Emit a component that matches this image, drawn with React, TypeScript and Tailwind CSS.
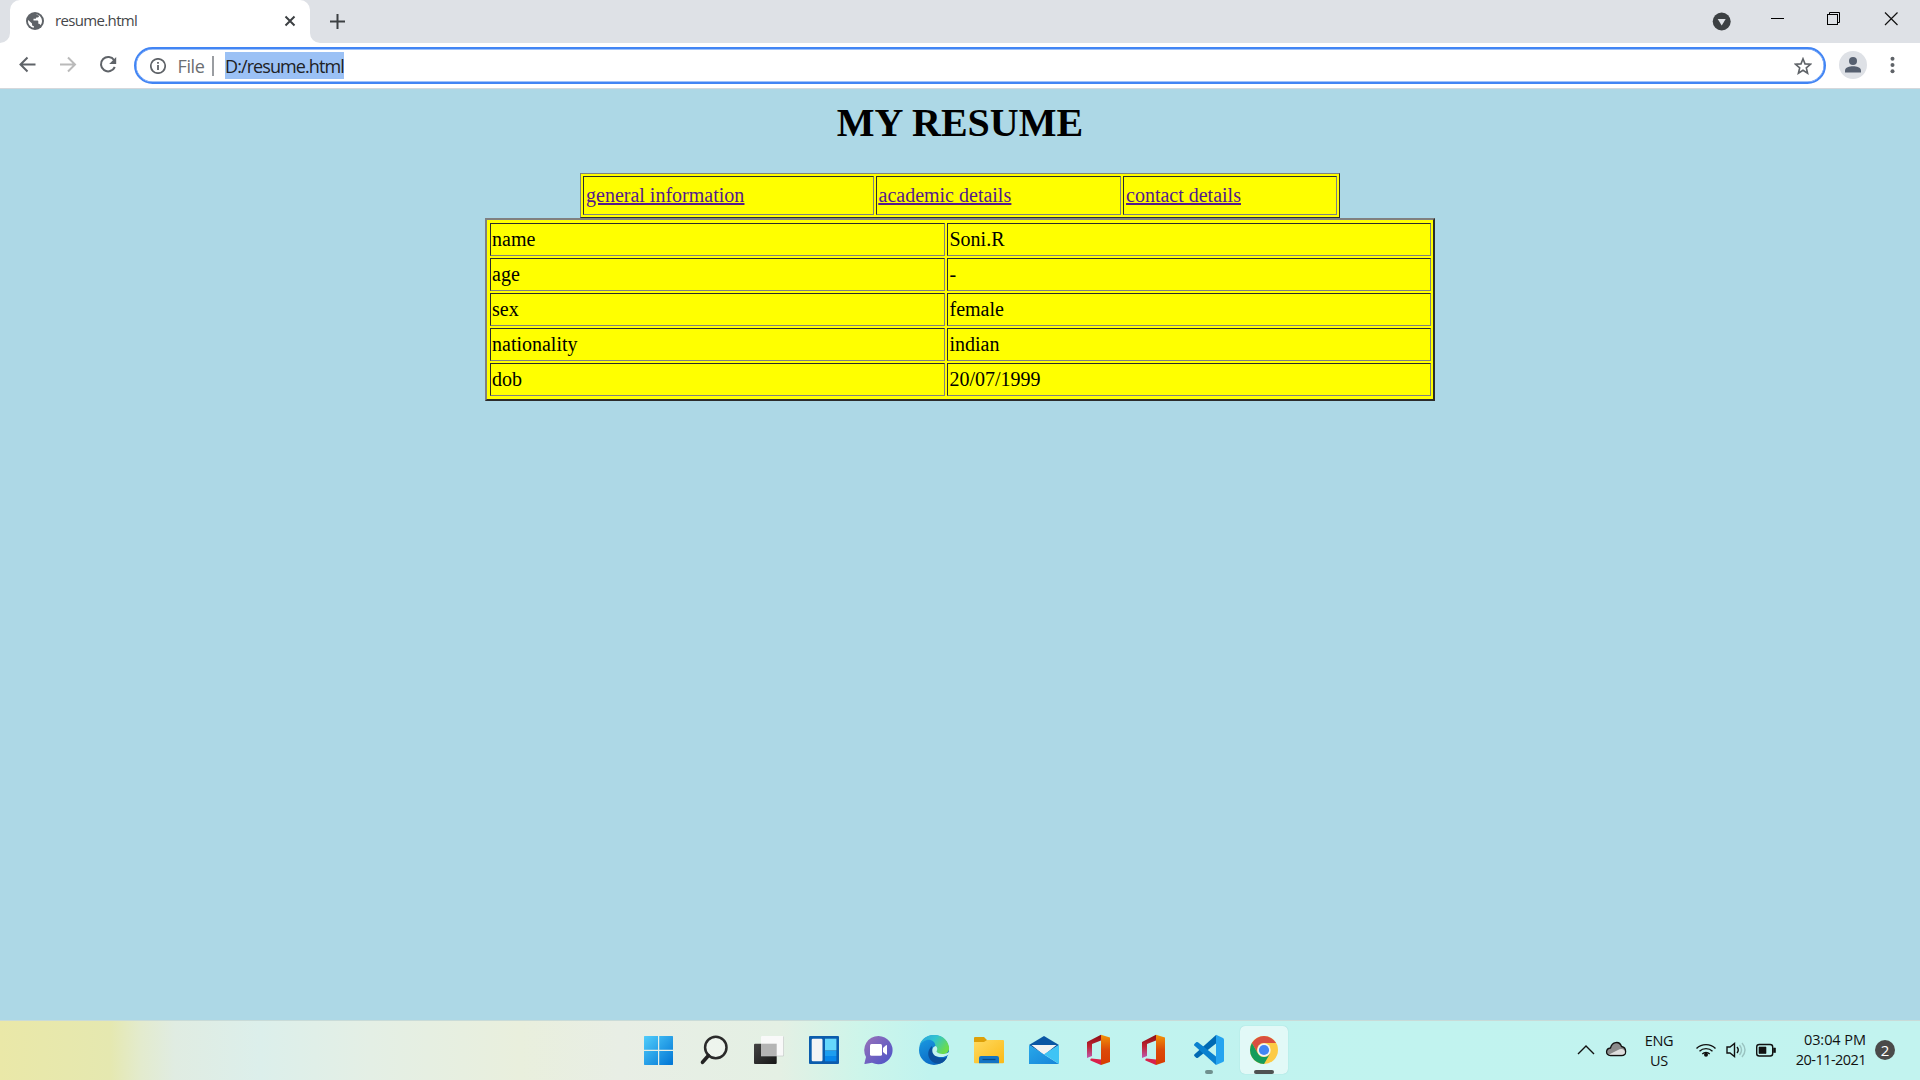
import React from "react";

const ui = "font-['Open_Sans','Noto_Sans',sans-serif]";

function TabStrip() {
  return (
    <div className="relative flex h-[43px] items-start bg-[#dee1e6]">
      <svg className="h-[43px] w-[322px] shrink-0" viewBox="0 0 322 43">
        <path d="M0 43A10 10 0 0 0 10 33V10A10 10 0 0 1 20 0H300A10 10 0 0 1 310 10V33A10 10 0 0 0 320 43Z" fill="#fff" />
        <circle cx="35" cy="21" r="9" fill="#5f6368" />
        <path d="M35.800 14.200C39.500 14.500 42 17.500 42 21C42 22.500 41.500 24 40.500 25.200C40 24 39.200 23.800 38.300 23.800V21.500C38.300 20.800 37.800 20.500 37.200 20.500H33.500V18.800H35.200C35.900 18.800 36.200 18.300 36.200 17.500H37.500C38.500 17.500 39 16.800 39 15.800ZM28.200 20L32 23.500V24.500C32 25.500 32.800 26 33.800 26V27.800C30.500 27.300 28 24.500 28 21Z" fill="#fff" />
        <path d="M285.500 16.500L294.500 25.500M294.500 16.500L285.500 25.500" stroke="#3c4043" strokeWidth="2" />
      </svg>
      <svg className="mt-[13px] ml-[7px] h-4 w-4" viewBox="0 0 16 16">
        <path d="M8.500 1V16M1 8.500H16" stroke="#3c4043" strokeWidth="2" />
      </svg>
      <span className={`absolute left-[55px] top-[10px] text-[15px] leading-[20px] tracking-[-0.65px] text-[#45474a] ${ui}`}>resume.html</span>
      <svg className="ml-auto h-[43px] w-[220px]" viewBox="1700 0 220 43">
        <circle cx="1721.700" cy="21.500" r="9" fill="#3c4043" />
        <path d="M1717.700 19H1725.700L1721.700 25.500Z" fill="#dee1e6" />
        <g stroke="#000" strokeWidth="1" fill="none">
          <path d="M1771 18.500H1784" />
          <rect x="1827.500" y="14.500" width="10" height="10" />
          <path d="M1829.500 14V12.500H1839.500V22.500H1838" />
          <path d="M1885 12.500L1897.500 25M1897.500 12.500L1885 25" stroke="#111" strokeWidth="1.200" />
        </g>
      </svg>
    </div>
  );
}

function Toolbar() {
  return (
    <div className="flex h-[46px] items-start border-b border-[#d5d8dc] bg-white">
      <svg className="h-[45px] w-[134px] shrink-0" viewBox="0 43 134 45" fill="none" strokeWidth="2">
        <path d="M35.500 64.500H20.500M27.500 57.500L20.500 64.500L27.500 71.500" stroke="#5f6368" />
        <path d="M60 64.500H75M68 57.500L75 64.500L68 71.500" stroke="#bababa" />
        <path d="M114.200 60.200A7.200 7.200 0 1 0 114.800 67" stroke="#5f6368" />
        <path d="M116.200 57V64H109.200Z" fill="#5f6368" />
      </svg>
      <div className={`mt-1 flex h-[37px] w-[1692px] items-center rounded-full border-2 border-[#4285f4] bg-white shadow-[inset_0_0_0_0.500px_#4285f4] ${ui}`}>
        <svg className="ml-[13.500px] h-4 w-4" viewBox="0 0 16 16">
          <circle cx="8" cy="8" r="7.200" fill="none" stroke="#5f6368" strokeWidth="1.700" />
          <path d="M8 7V12M8 4V5.700" stroke="#5f6368" strokeWidth="1.800" />
        </svg>
        <span className="ml-[12px] w-[34.500px] pt-px text-[18px] leading-[27px] tracking-[-0.4px] text-[#6b6e72]">File</span>
        <span className="h-5 w-[2px] bg-[#9a9da1]" />
        <span className="ml-[11px] h-[27px] w-[119px] whitespace-nowrap bg-[#9bc1f5] text-[18px] leading-[28px] tracking-[-0.92px] text-[#202124]">D:/resume.html</span>
        <svg className="ml-auto mr-[12.500px] h-[18px] w-[18px]" viewBox="0 0 18 18">
          <path d="M9 1.800L11 6.900L16.500 7.300L12.300 10.800L13.600 16.200L9 13.300L4.400 16.200L5.700 10.800L1.500 7.300L7 6.900Z" fill="none" stroke="#5f6368" strokeWidth="1.600" />
        </svg>
      </div>
      <svg className="h-[45px] w-[94px]" viewBox="1826 43 94 45">
        <circle cx="1853" cy="65" r="14" fill="#dee1e6" />
        <circle cx="1853" cy="61" r="4" fill="#566070" />
        <path d="M1845 72.500V70.500C1845 67.500 1849.500 66.200 1853 66.200S1861 67.500 1861 70.500V72.500Z" fill="#566070" />
        <g fill="#5f6368"><circle cx="1892.500" cy="58.800" r="2" /><circle cx="1892.500" cy="65" r="2" /><circle cx="1892.500" cy="71.200" r="2" /></g>
      </svg>
    </div>
  );
}

const cell = "border border-t-[#2c2c2c] border-l-[#2c2c2c] border-b-[#808080] border-r-[#808080] flex items-center";
const frame = "border-t-[#808080] border-l-[#808080] border-b-[#2c2c2c] border-r-[#2c2c2c] bg-[#ffff00]";

const details = [
  ["name", "Soni.R"],
  ["age", "-"],
  ["sex", "female"],
  ["nationality", "indian"],
  ["dob", "20/07/1999"],
];

function ResumePage() {
  return (
    <main className="flex flex-1 flex-col items-center bg-[#add8e6] font-['Liberation_Serif',serif] text-[20px] leading-[23px] text-black">
      <h1 className="mt-[11px] h-[73px] text-[40px] font-bold leading-[46px]">MY RESUME</h1>
      <nav className={`grid h-[45px] w-[760px] grid-cols-[291px_245px_214px] gap-[2px] border p-[2px] text-[#551a8b] underline ${frame}`}>
        <a className={`${cell} pl-[2px]`}>general information</a>
        <a className={`${cell} pl-[1.500px]`}>academic details</a>
        <a className={`${cell} pl-[2px]`}>contact details</a>
      </nav>
      <section className={`grid w-[950px] auto-rows-[33px] grid-cols-[455px_484px] gap-[2px] border-2 py-[3px] pl-[3px] pr-[2px] ${frame}`}>
        {details.map(([k, v]) => (
          <React.Fragment key={k}>
            <div className={`${cell} pl-px`}>{k}</div>
            <div className={`${cell} pl-[1.500px]`}>{v}</div>
          </React.Fragment>
        ))}
      </section>
    </main>
  );
}

function Slot({ children, active }: { children: React.ReactNode; active?: boolean }) {
  return (
    <div className={active ? "h-12 w-12 rounded-[5px] bg-[#e2f9f7] shadow-[0_0_1px_#8cc]" : "h-12 w-12"}>
      <svg className="h-12 w-12" viewBox="0 0 48 48">{children}</svg>
    </div>
  );
}

function OfficeIcon() {
  return (
    <Slot>
      <path d="M12 16L26 8.700V14.500L17 18V30L12 32Z" fill="url(#offRed)" />
      <path d="M26 8.700L35 11.500V36L26 39Z" fill="url(#offOrange)" />
      <path d="M16.500 32.500L26 33.500V39L15.500 34.500C15 33.800 15.500 32.500 16.500 32.500Z" fill="#d9204a" />
    </Slot>
  );
}

function Gradients() {
  return (
    <svg className="absolute h-0 w-0">
      <defs>
        <linearGradient id="win" x1="0" y1="0" x2="1" y2="1"><stop stopColor="#50cdfb" /><stop offset="1" stopColor="#0074d4" /></linearGradient>
        <linearGradient id="dark" x1="0" y1="0" x2="1" y2="1"><stop stopColor="#444" /><stop offset="1" stopColor="#161616" /></linearGradient>
        <linearGradient id="chat" x1="0" y1="0" x2="1" y2="1"><stop stopColor="#9a72b8" /><stop offset="1" stopColor="#4a52c9" /></linearGradient>
        <linearGradient id="edgeTop" x1="0" y1="0" x2="1" y2=".5"><stop stopColor="#2a9fe0" /><stop offset=".5" stopColor="#30c4d0" /><stop offset="1" stopColor="#6bdc4c" /></linearGradient>
        <linearGradient id="edgeBody" x1="0" y1="0" x2="0.500" y2="1"><stop stopColor="#1ca0e4" /><stop offset="1" stopColor="#0a68c4" /></linearGradient>
        <linearGradient id="folder" x1="0" y1="0" x2="1" y2="1"><stop stopColor="#ffda60" /><stop offset="1" stopColor="#fbb916" /></linearGradient>
        <linearGradient id="mail" x1="0" y1="0" x2="1" y2="1"><stop stopColor="#28a8ea" /><stop offset="1" stopColor="#1684d8" /></linearGradient>
        <linearGradient id="offRed" x1="0" y1="0" x2="0" y2="1"><stop stopColor="#8c0c14" /><stop offset=".5" stopColor="#bf2433" /><stop offset="1" stopColor="#bd5ab0" /></linearGradient>
        <linearGradient id="offOrange" x1="0" y1="0" x2="0" y2="1"><stop stopColor="#f29408" /><stop offset=".5" stopColor="#dc4a08" /><stop offset="1" stopColor="#d83b01" /></linearGradient>
      </defs>
    </svg>
  );
}

function Taskbar() {
  return (
    <footer className="relative flex h-[60px] border-t border-[#c9dbd8] bg-[linear-gradient(90deg,#eae8a8_0px,#e5e8b0_110px,#e3ebcd_140px,#e0ece2_175px,#dcefeb_260px,#e4efe5_370px,#e9efdd_520px,#e8eee5_620px,#e4f0e4_780px,#cdf5ea_860px,#c0f3ef_930px,#c2f3ef_1920px)]">
      <Gradients />
      <div className="ml-[635px] mt-[5px] flex gap-[7px]">
        <Slot><path d="M9.500 10H23V23.700H9V10.500ZM24.200 10H37.500L38 10.500V23.700H24.200ZM9 25H23V39H9.500L9 38.500ZM24.200 25H38V38.500L37.500 39H24.200Z" fill="url(#win)" /></Slot>
        <Slot>
          <circle cx="25.800" cy="21.500" r="10.700" fill="#ffffff55" stroke="#2a2a2a" strokeWidth="2.500" />
          <path d="M18.500 29.500L12.500 36.300" stroke="#222" strokeWidth="3.600" strokeLinecap="round" />
        </Slot>
        <Slot>
          <rect x="9" y="17.700" width="22.700" height="20.300" rx="1" fill="url(#dark)" />
          <rect x="16" y="10" width="22.700" height="20" rx="1" fill="#f9f9f9" />
          <rect x="16" y="17.700" width="15.700" height="12.300" fill="#b4b4b4" />
          <path d="M16 30H38.500V10.500" stroke="#bfc5c2" strokeWidth=".6" fill="none" />
        </Slot>
        <Slot>
          <rect x="9" y="10" width="30" height="28" rx="1" fill="#0b5cad" />
          <rect x="11.700" y="12.700" width="10.800" height="22.600" rx="1.200" fill="#f3f3f5" />
          <path d="M25 12.700H36.400V24.500H25Z" fill="#66d7fc" /><path d="M25 25H36.400V30H25Z" fill="#1d9ef0" /><path d="M25 30H36.400V35.300H25Z" fill="#0786ea" />
        </Slot>
        <Slot>
          <path d="M23.500 10A14.200 14.100 0 1 1 17 36.700L10 38Q9.200 38 9.500 37L11 31A14.200 14.100 0 0 1 23.500 10Z" fill="url(#chat)" />
          <rect x="15" y="18" width="12" height="11.700" rx="1.500" fill="#fff" /><path d="M28 22L31 19.200Q32 18.800 32 20V28Q32 29 31 28.500L28 26Z" fill="#fff" />
        </Slot>
        <Slot>
          <circle cx="24" cy="24" r="15" fill="url(#edgeBody)" />
          <path d="M9.500 20C13 12 25 11 25.500 20.500C25 24 26 27 31 28.500C38 29 39.500 24 39 21C37.500 12 30 8.700 23.500 9C16 9.300 10.500 14 9.500 20Z" fill="url(#edgeTop)" />
          <path d="M22 20C14 27 20 39 30 37.500C33 36.800 36 34 37 31.200C32 34 23 32 22 20Z" fill="#0b4f9c" />
          <path d="M25.500 20C21 21 21 29 27 30.500C32 32 36 30.500 39 28.500V26C35 29 28 28.500 26.500 25.500C27.500 24 27.800 21 25.500 20Z" fill="#c4f3ef" />
          <path d="M37 31L39.500 28V33Z" fill="#c4f3ef" />
        </Slot>
        <Slot>
          <path d="M9 12Q9 11 10 11H19L22 14H30V20H9Z" fill="#dda009" />
          <path d="M9 16H19L22 14H38Q39 14 39 15V36.300Q39 37.300 38 37.300H10Q9 37.300 9 36.300Z" fill="url(#folder)" />
          <path d="M14 37.300V32Q14 30 16 30H32Q34 30 34 32V37.300Z" fill="#1474c4" /><path d="M17.500 33.500H30.500" stroke="#064a88" strokeWidth="1.200" />
        </Slot>
        <Slot>
          <path d="M9 19L24 10L39 19L24 29Z" fill="#0a56a4" />
          <path d="M11.500 19H36.500L24 29Z" fill="#f3f3f3" />
          <path d="M9 19L39 38H9Z" fill="url(#mail)" /><path d="M39 19V38L24 28.200Z" fill="#3fc4f5" />
        </Slot>
        <OfficeIcon />
        <OfficeIcon />
        <Slot>
          <path d="M9.300 30L11.500 32Q12.300 32.300 13 31.800L31 17.500V9L9.300 28.500Q8.800 29.300 9.300 30Z" fill="#0069b3" />
          <path d="M9.300 18L11.500 16Q12.300 15.700 13 16.200L31 30.500V39L9.300 19.500Q8.800 18.700 9.300 18Z" fill="#0a80cf" />
          <path d="M31 8.700L38 12Q39 12.500 39 13.500V34.500Q39 35.500 38 36L31 39Z" fill="#25a4f0" />
          <rect x="20" y="44" width="8" height="4" rx="2" fill="#6f908e" />
        </Slot>
        <Slot active>
          <circle cx="24" cy="24" r="14" fill="#fccb45" />
          <path d="M11.900 17A14 14 0 0 1 36.100 17H24A7 7 0 0 0 17.900 27.500Z" fill="#d94f40" />
          <path d="M11.900 17A14 14 0 0 0 24 38L30.100 27.500A7 7 0 0 1 17.900 27.500Z" fill="#149c5a" />
          <circle cx="24" cy="24" r="6.700" fill="#f4f4f4" /><circle cx="24" cy="24" r="5.100" fill="#4285f4" />
          <rect x="14" y="44" width="20" height="4" rx="2" fill="#4e5252" />
        </Slot>
      </div>
      <div className={`ml-auto flex pt-px text-[14.5px] leading-[20px] text-[#111] ${ui}`}>
        <svg className="h-[58px] w-[70px]" viewBox="1570 1022 70 58">
          <path d="M1578 1054L1586 1046L1594 1054" fill="none" stroke="#111" strokeWidth="1.400" />
          <path d="M1610.500 1055.500C1605 1055 1605.500 1048.500 1610.500 1048C1612 1041.500 1619.500 1040.500 1621.500 1046.500C1627 1047.500 1627 1055.500 1621.500 1055.500Z" fill="#8b8b8b" stroke="#111" strokeWidth="1.300" />
          <path d="M1609 1054.500L1619.500 1049.200Q1624 1048 1625 1052Q1624.500 1054.800 1621.500 1054.800H1610Z" fill="#dedede" />
        </svg>
        <div className="mt-[9px] flex w-[38px] flex-col items-center tracking-[-0.3px]"><span>ENG</span><span>US</span></div>
        <svg className="h-[58px] w-[112px]" viewBox="1678 1022 112 58" fill="none" stroke="#111" strokeWidth="1.400">
          <path d="M1696.500 1048.500A13.500 13.500 0 0 1 1715.500 1048.500M1699.500 1051.300A9.300 9.300 0 0 1 1712.500 1051.300M1702.300 1054A5.300 5.300 0 0 1 1709.700 1054" />
          <circle cx="1706" cy="1054.800" r="2" fill="#111" stroke="none" />
          <path d="M1727 1047V1053H1730L1734.500 1056.500V1043.500L1730 1047Z" />
          <path d="M1737 1047Q1739.500 1050 1737 1053" />
          <path d="M1739.500 1045Q1743.500 1050 1739.500 1055M1742 1043Q1748 1050 1742 1057" stroke="#9ac3c0" />
          <rect x="1756.700" y="1044.500" width="16" height="11.500" rx="2.500" />
          <path d="M1759 1047H1766V1053.500H1759ZM1773.500 1048H1775.500V1052.500H1773.500Z" fill="#111" stroke="#111" strokeWidth=".6" />
        </svg>
        <div className="mt-[8px] flex w-[76px] flex-col items-end whitespace-nowrap"><span className="tracking-[-0.05px]">03:04 PM</span><span className="tracking-[-0.55px]">20-11-2021</span></div>
        <div className="ml-[9px] mr-[25px] mt-[18px] flex h-5 w-5 items-center justify-center rounded-full bg-[#4a4a4a] text-[15px] text-white">2</div>
      </div>
    </footer>
  );
}

export default function App() {
  return (
    <div className="flex h-[1080px] w-[1920px] flex-col overflow-hidden">
      <TabStrip />
      <Toolbar />
      <ResumePage />
      <Taskbar />
    </div>
  );
}
